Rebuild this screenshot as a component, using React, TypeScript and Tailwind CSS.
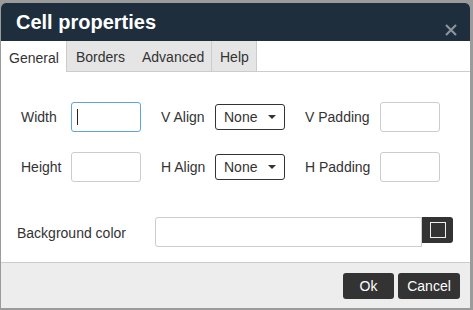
export default function App() {
  return (
    <div className="w-[473px] h-[310px] bg-[#9b9b9b] pt-[3px] pl-[1px] font-['Liberation_Sans',Arial,sans-serif] text-[#333]">
      <div className="w-[469px] h-[305px] bg-white rounded-t-[5px] overflow-hidden flex flex-col">
        {/* header */}
        <div className="h-[38px] shrink-0 bg-[#1e2e3d] flex items-center pl-[15px] pr-[13px]">
          <span className="text-white text-[20px] font-bold leading-none mt-[-1px]">Cell properties</span>
          <svg className="ml-auto mt-[15px]" width="12" height="12" viewBox="0 0 12 12">
            <path d="M1 1 L11 11 M11 1 L1 11" stroke="#8b939b" strokeWidth="2.2" />
          </svg>
        </div>

        {/* tabs */}
        <div className="h-[31px] shrink-0 flex text-[14px]">
          <div className="w-[66px] bg-white border-r border-[#ccc] flex items-center pl-[8px] pt-[3px]">General</div>
          <div className="flex bg-[#e5e5e5] border-b border-[#ccc]">
            <div className="w-[66px] pl-[9px] flex items-center pt-[3px]">Borders</div>
            <div className="w-[79px] pl-[9px] flex items-center pt-[3px] border-r border-[#ccc] whitespace-nowrap">Advanced</div>
            <div className="w-[45px] pl-[8px] flex items-center pt-[3px] border-r border-[#ccc]">Help</div>
          </div>
          <div className="flex-1 border-b border-[#ccc]" />
        </div>

        {/* body */}
        <div className="flex-1 flex flex-col text-[14px]">
          <div className="flex items-center pl-[20px] mt-[30px] h-[30px]">
            <span className="w-[50px]">Width</span>
            <div className="w-[70px] h-[30px] rounded-[3px] border border-[#5fa3e1] flex items-center pl-[5px]">
              <div className="w-px h-[16px] bg-[#222]" />
            </div>
            <span className="w-[54px] ml-[20px]">V Align</span>
            <Select />
            <span className="w-[75px] ml-[20px]">V Padding</span>
            <div className="w-[60px] h-[30px] rounded-[3px] border border-[#ccc]" />
          </div>
          <div className="flex items-center pl-[20px] mt-[20px] h-[30px]">
            <span className="w-[50px]">Height</span>
            <div className="w-[70px] h-[30px] rounded-[3px] border border-[#ccc]" />
            <span className="w-[54px] ml-[20px]">H Align</span>
            <Select />
            <span className="w-[75px] ml-[20px]">H Padding</span>
            <div className="w-[60px] h-[30px] rounded-[3px] border border-[#ccc]" />
          </div>
          <div className="flex items-start pl-[16px] mt-[35px] h-[30px]">
            <span className="w-[138px] mt-[6px]">Background color</span>
            <div className="w-[267px] h-[30px] rounded-l-[3px] border border-[#ccc]" />
            <div className="w-[31px] h-[26px] bg-[#333] rounded-r-[3px] flex items-center justify-center">
              <div className="w-[16px] h-[16px] border border-[#eee]" />
            </div>
          </div>
        </div>

        {/* footer */}
        <div className="h-[46px] shrink-0 bg-[#ededed] border-t border-[#ccc] flex justify-end items-start pt-[10px] pr-[10px] gap-[4px] text-[14px]">
          <button className="w-[51px] h-[26px] bg-[#333] text-white rounded-[3px]">Ok</button>
          <button className="w-[62px] h-[26px] bg-[#333] text-white rounded-[3px]">Cancel</button>
        </div>
      </div>
    </div>
  );
}

function Select() {
  return (
    <div className="w-[70px] h-[26px] rounded-[3px] border border-[#333] flex items-center pl-[8px] pr-[8px]">
      <span>None</span>
      <svg className="ml-auto" width="8" height="4" viewBox="0 0 8 4">
        <path d="M0 0 L8 0 L4 4 Z" fill="#333" />
      </svg>
    </div>
  );
}
